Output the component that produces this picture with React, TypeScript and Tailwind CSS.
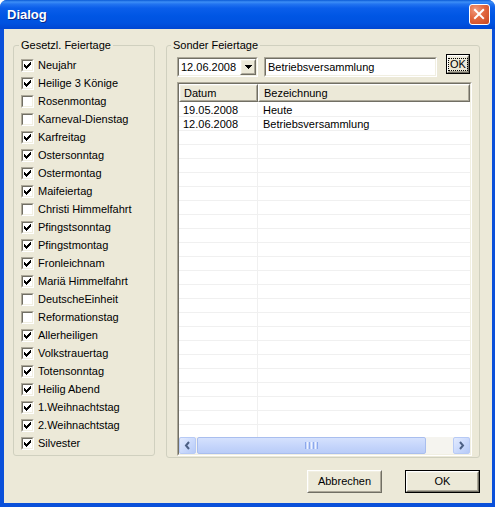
import React from "react";

const items: [string, boolean][] = [
  ["Neujahr", true],
  ["Heilige 3 Könige", true],
  ["Rosenmontag", false],
  ["Karneval-Dienstag", false],
  ["Karfreitag", true],
  ["Ostersonntag", true],
  ["Ostermontag", true],
  ["Maifeiertag", true],
  ["Christi Himmelfahrt", false],
  ["Pfingstsonntag", true],
  ["Pfingstmontag", true],
  ["Fronleichnam", true],
  ["Mariä Himmelfahrt", true],
  ["DeutscheEinheit", false],
  ["Reformationstag", false],
  ["Allerheiligen", true],
  ["Volkstrauertag", true],
  ["Totensonntag", true],
  ["Heilig Abend", true],
  ["1.Weihnachtstag", true],
  ["2.Weihnachtstag", true],
  ["Silvester", true],
];

const rows: [string, string][] = [
  ["19.05.2008", "Heute"],
  ["12.06.2008", "Betriebsversammlung"],
];

function CheckBox({ checked }: { checked: boolean }) {
  return (
    <div className="w-[13px] h-[13px] shrink-0 border border-t-[#ACA899] border-l-[#ACA899] border-b-white border-r-white">
      <div className="w-full h-full border border-t-[#716F64] border-l-[#716F64] border-b-[#F1EFE2] border-r-[#F1EFE2] bg-white flex items-center justify-center">
        {checked && (
          <svg width="7" height="7" viewBox="0 0 7 7" shapeRendering="crispEdges">
            <path
              d="M6 0h1v1h-1z M5 1h2v1h-2z M0 2h1v1h-1z M4 2h3v1h-3z M0 3h2v1h-2z M3 3h3v1h-3z M0 4h5v1h-5z M1 5h3v1h-3z M2 6h1v1h-1z"
              fill="#000"
            />
          </svg>
        )}
      </div>
    </div>
  );
}

function Raised({ children, className = "" }: { children?: React.ReactNode; className?: string }) {
  return (
    <div className={"border border-t-white border-l-white border-b-[#716F64] border-r-[#716F64] " + className}>
      <div className="w-full h-full border border-t-[#F1EFE2] border-l-[#F1EFE2] border-b-[#ACA899] border-r-[#ACA899] bg-[#ECE9D8] flex items-center justify-center">
        {children}
      </div>
    </div>
  );
}

function Sunken({ children, className = "", innerClass = "" }: { children?: React.ReactNode; className?: string; innerClass?: string }) {
  return (
    <div className={"border border-t-[#ACA899] border-l-[#ACA899] border-b-white border-r-white " + className}>
      <div className={"w-full h-full border border-t-[#716F64] border-l-[#716F64] border-b-[#F1EFE2] border-r-[#F1EFE2] bg-white " + innerClass}>
        {children}
      </div>
    </div>
  );
}

function ScrollArrow({ dir }: { dir: "left" | "right" }) {
  return (
    <div className="w-[17px] h-[17px] shrink-0 rounded-[2px] border border-[#B7CAF5] bg-[linear-gradient(135deg,#E3EBFE_0%,#CBDAFC_50%,#B6CAF7_100%)] flex items-center justify-center">
      <svg width="7" height="9" viewBox="0 0 7 9">
        {dir === "left" ? (
          <path d="M5 1 L2 4.5 L5 8" stroke="#4D6185" strokeWidth="2" fill="none" />
        ) : (
          <path d="M2 1 L5 4.5 L2 8" stroke="#4D6185" strokeWidth="2" fill="none" />
        )}
      </svg>
    </div>
  );
}

export default function App() {
  return (
    <div className="w-[495px] h-[507px] bg-white font-['Liberation_Sans',Arial,sans-serif] text-[11px] leading-[13px] text-black">
      <div className="w-full h-full flex flex-col rounded-t-[7px] overflow-hidden bg-[#0A50DA]">
        {/* Title bar */}
        <div className="h-[29px] shrink-0 flex items-center justify-between pl-[7px] pr-[5px] bg-[linear-gradient(180deg,#0A5AD6_0%,#3D8FF6_7%,#2274F0_14%,#0A5EEA_28%,#0056E4_55%,#0052E0_80%,#0046D2_100%)]">
          <span className="text-white font-bold text-[13px] leading-[16px] [text-shadow:1px_1px_0_#0A2A8A]">Dialog</span>
          <div className="w-[21px] h-[21px] rounded-[3px] border border-white bg-[radial-gradient(circle_at_30%_25%,#F19A7E_0%,#E2673F_45%,#C8461F_100%)] flex items-center justify-center">
            <svg width="21" height="21" viewBox="0 0 21 21">
              <path d="M5.5 5.5 L14.5 14.5 M14.5 5.5 L5.5 14.5" stroke="#fff" strokeWidth="2.2" strokeLinecap="square" />
            </svg>
          </div>
        </div>

        {/* Client area */}
        <div className="flex-1 ml-[4px] mr-[3px] mb-[4px] bg-[#ECE9D8] flex flex-col pt-[16px] pl-[9px] pr-[12px]">
          <div className="flex items-start gap-[11px]">
            {/* Left group */}
            <div className="relative w-[142px] h-[411px] shrink-0 border border-[#D0D0BF] rounded-[3px] pt-[10px] pl-[7px]">
              <span className="absolute -top-[7px] left-[5px] px-[2px] bg-[#ECE9D8] leading-[13px]">Gesetzl. Feiertage</span>
              <div className="flex flex-col">
                {items.map(([label, checked]) => (
                  <div key={label} className="h-[18px] flex items-center gap-[4px] whitespace-nowrap">
                    <CheckBox checked={checked} />
                    <span>{label}</span>
                  </div>
                ))}
              </div>
            </div>

            {/* Right group */}
            <div className="relative w-[314px] h-[413px] shrink-0 border border-[#D0D0BF] rounded-[3px] pt-[8px] pl-[10px]">
              <span className="absolute -top-[7px] left-[4px] px-[2px] bg-[#ECE9D8] leading-[13px]">Sonder Feiertage</span>
              <div className="flex items-start">
                <Sunken className="w-[81px] h-[20px] mt-[3px] shrink-0" innerClass="flex items-center">
                  <span className="flex-1 pl-[2px] whitespace-nowrap">12.06.2008</span>
                  <Raised className="w-[16px] h-[16px] shrink-0">
                    <svg width="7" height="4" viewBox="0 0 7 4" shapeRendering="crispEdges">
                      <path d="M0 0h7v1h-7z M1 1h5v1h-5z M2 2h3v1h-3z M3 3h1v1h-1z" fill="#000" />
                    </svg>
                  </Raised>
                </Sunken>
                <Sunken className="w-[173px] h-[20px] mt-[3px] ml-[6px] shrink-0" innerClass="flex items-center">
                  <span className="pl-[2px] whitespace-nowrap">Betriebsversammlung</span>
                </Sunken>
                <div className="ml-[9px] w-[24px] h-[20px] shrink-0 border border-black">
                  <Raised className="w-full h-full">
                    <span className="border border-dotted border-black px-[1px] leading-[11px]">OK</span>
                  </Raised>
                </div>
              </div>

              {/* List view */}
              <Sunken className="mt-[5px] w-[295px] h-[374px]" innerClass="flex flex-col overflow-hidden">
                <div className="h-[18px] shrink-0 flex">
                  <Raised className="w-[79px] h-full shrink-0">
                    <span className="w-full pl-[3px]">Datum</span>
                  </Raised>
                  <Raised className="flex-1 h-full">
                    <span className="w-full pl-[4px]">Bezeichnung</span>
                  </Raised>
                </div>
                <div className="flex-1 overflow-hidden flex flex-col pt-[1px]">
                  {Array.from({ length: 24 }).map((_, i) => {
                    const r = rows[i];
                    return (
                      <div key={i} className="h-[14px] shrink-0 flex border-b border-[#F0F0F0]">
                        <div className="w-[79px] shrink-0 border-r border-[#F0F0F0] pl-[4px] leading-[14px] whitespace-nowrap">
                          {r ? r[0] : ""}
                        </div>
                        <div className="flex-1 pl-[5px] leading-[14px] whitespace-nowrap">{r ? r[1] : ""}</div>
                      </div>
                    );
                  })}
                </div>
                <div className="h-[17px] shrink-0 flex bg-[#F5F4EF]">
                  <ScrollArrow dir="left" />
                  <div className="flex-1 pl-[1px]">
                    <div className="w-[229px] h-[17px] rounded-[2px] border border-[#A9BEEE] bg-[linear-gradient(180deg,#D5E1FD_0%,#C6D6FB_50%,#B9CCF8_100%)] flex items-center justify-center">
                      <div className="flex gap-[1px]">
                        <div className="w-[1px] h-[7px] bg-[#8DA9EC]" />
                        <div className="w-[1px] h-[7px] bg-[#EEF3FE]" />
                        <div className="w-[1px] h-[7px] bg-[#8DA9EC]" />
                        <div className="w-[1px] h-[7px] bg-[#EEF3FE]" />
                        <div className="w-[1px] h-[7px] bg-[#8DA9EC]" />
                        <div className="w-[1px] h-[7px] bg-[#EEF3FE]" />
                        <div className="w-[1px] h-[7px] bg-[#8DA9EC]" />
                      </div>
                    </div>
                  </div>
                  <ScrollArrow dir="right" />
                </div>
              </Sunken>
            </div>
          </div>

          {/* Buttons */}
          <div className="flex justify-end gap-[23px] mt-[12px]">
            <Raised className="w-[75px] h-[23px]">
              <span>Abbrechen</span>
            </Raised>
            <div className="w-[75px] h-[23px] border border-black">
              <Raised className="w-full h-full">
                <span>OK</span>
              </Raised>
            </div>
          </div>
        </div>
      </div>
    </div>
  );
}
